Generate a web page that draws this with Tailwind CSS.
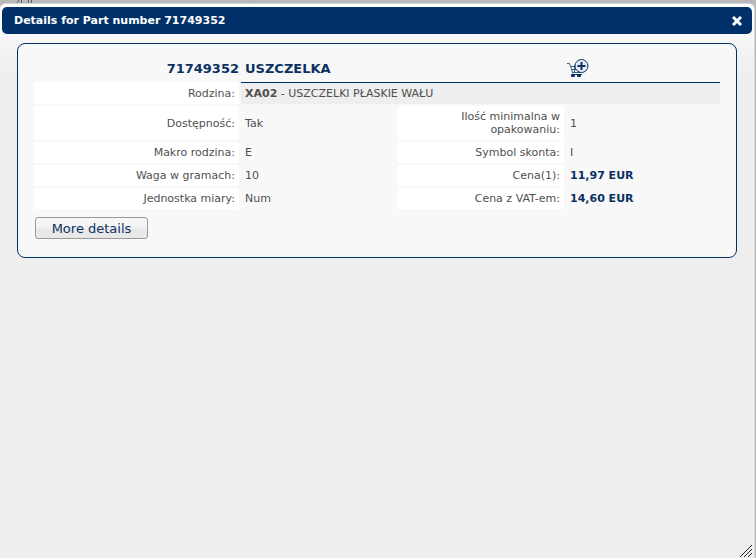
<!DOCTYPE html>
<html lang="pl">
<head>
  <meta charset="UTF-8" />
  <meta name="viewport" content="width=device-width, initial-scale=1.0" />
  <title>Details for Part number 71749352</title>
  <script src="https://cdn.jsdelivr.net/npm/@tailwindcss/browser@4"></script>
</head>
<body class="min-h-screen flex flex-col bg-[#b8b8b8] pr-px font-['DejaVu_Sans',sans-serif] text-[11px] leading-[13px] text-[#4f4f4f]">

  <!-- Edge of the page behind the dialog -->
  <svg class="w-full h-[3px]" fill="none" stroke="#59616b" aria-hidden="true">
    <path d="M19 0L17 3M21.500 0V3M28.500 0V3M31.500 0V3" />
  </svg>

  <!-- Dialog -->
  <div role="dialog" aria-labelledby="dialogTitle" class="relative flex-1 flex flex-col rounded-t-md border-t border-r border-[#d8d8d8] bg-[#eeeeee] bg-linear-to-b from-white to-[#eeeeee] to-[70px] px-[2px] pt-[3px]">

    <!-- Title bar -->
    <header class="flex items-center justify-between h-[27px] rounded-[5px] bg-[#003068] pl-3 pr-2 text-white">
      <h1 id="dialogTitle" class="font-bold">Details for Part number 71749352</h1>
      <button type="button" aria-label="Close" class="p-0.5">
        <svg class="w-[10px] h-[10px]" viewBox="0 0 10 10" fill="none" stroke="#fff" stroke-width="3"><path d="M1 1L9 9M9 1L1 9" /></svg>
      </button>
    </header>

    <!-- Part details -->
    <main class="mt-[9px] mx-[15px] rounded-lg border border-[#003068] bg-[#f8f8f8] px-[14px] pt-[11px] pb-[18px]">
      <table class="w-full table-fixed border-separate border-spacing-[2px]">
        <colgroup>
          <col class="w-[205px]">
          <col>
          <col class="w-[167px]">
          <col>
        </colgroup>
        <tbody>
          <tr class="text-[13px] text-[#0b3162]">
            <th class="h-[23px] text-right font-bold">71749352</th>
            <th colspan="2" class="px-1 text-left font-bold">USZCZELKA</th>
            <td>
              <button type="button" aria-label="Add to cart" class="block pb-0.5">
                <svg class="w-6 h-5" viewBox="0 0 24 20" fill="none">
                  <path d="M1 5.500H3.500L7 15.500M4 8.500H12M5 11.500H13M8.500 7V14M12.500 12V14M6 14.500H15.500" stroke="#3d5f88" />
                  <path d="M7 16.500H16" stroke="#12386a" />
                  <rect x="5" y="16" width="4" height="3" rx="1" fill="#0b3162" />
                  <rect x="11" y="16" width="4" height="3" rx="1" fill="#0b3162" />
                  <circle cx="15.500" cy="8" r="6.500" fill="#e6eaf4" stroke="#0b3162" />
                  <path d="M11.500 8H19.500M15.500 4V12" stroke="#0b3162" stroke-width="2" />
                </svg>
              </button>
            </td>
          </tr>
          <tr>
            <th class="bg-white p-1 text-right font-normal">Rodzina:</th>
            <td colspan="3" class="border-t border-[#003068] bg-[#eeeeee] p-1"><b>XA02</b> - USZCZELKI PŁASKIE WAŁU</td>
          </tr>
          <tr>
            <th class="bg-white p-1 text-right font-normal">Dostępność:</th>
            <td class="p-1">Tak</td>
            <th class="bg-white p-1 text-right font-normal">Ilość minimalna w opakowaniu:</th>
            <td class="p-1">1</td>
          </tr>
          <tr>
            <th class="bg-white p-1 text-right font-normal">Makro rodzina:</th>
            <td class="p-1">E</td>
            <th class="bg-white p-1 text-right font-normal">Symbol skonta:</th>
            <td class="p-1">I</td>
          </tr>
          <tr>
            <th class="bg-white p-1 text-right font-normal">Waga w gramach:</th>
            <td class="p-1">10</td>
            <th class="bg-white p-1 text-right font-normal">Cena(1):</th>
            <td class="p-1 font-bold text-[#0b3162]">11,97 EUR</td>
          </tr>
          <tr>
            <th class="bg-white p-1 text-right font-normal">Jednostka miary:</th>
            <td class="p-1">Num</td>
            <th class="bg-white p-1 text-right font-normal">Cena z VAT-em:</th>
            <td class="p-1 font-bold text-[#0b3162]">14,60 EUR</td>
          </tr>
        </tbody>
      </table>
      <button type="button" class="mt-[6px] ml-[3px] flex h-[22px] w-[113px] items-center justify-center rounded-[3px] border border-[#999999] bg-linear-to-b from-[#f6f6f6] from-40% to-[#e8e8e8] to-60% text-[13px] text-[#0b3162]">More details</button>
    </main>

    <!-- Resize grip -->
    <svg class="absolute right-[2px] bottom-[1px] w-3 h-3 cursor-se-resize" viewBox="0 0 12 12" stroke="#222" fill="none" aria-hidden="true">
      <path d="M0 12L12 0M4 12L12 4M8 12L12 8" />
    </svg>
  </div>

</body>
</html>
